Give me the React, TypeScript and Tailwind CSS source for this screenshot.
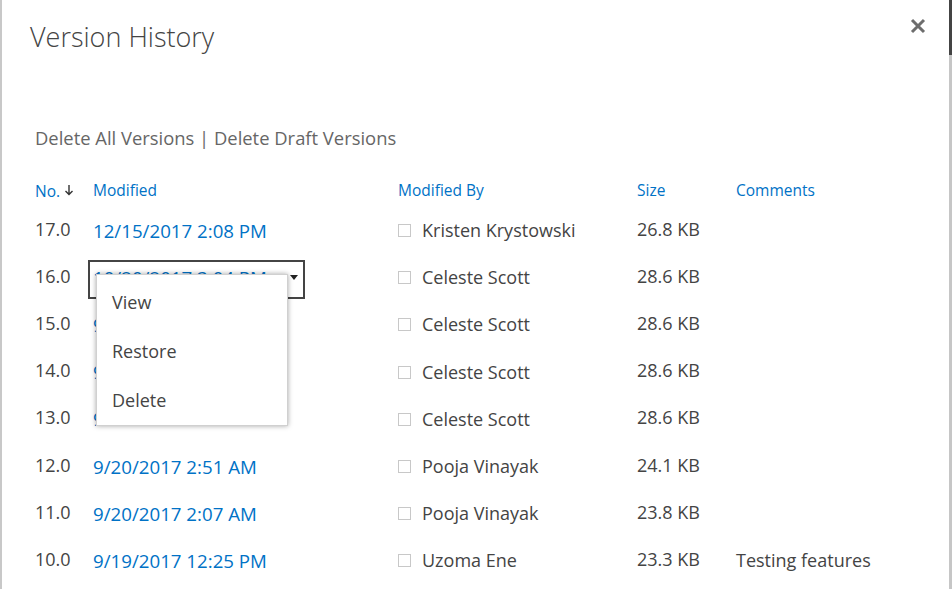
import React from "react";

const rows = [
  { no: "17.0", date: "12/15/2017 2:08 PM", by: "Kristen Krystowski", size: "26.8 KB", comment: "" },
  { no: "16.0", date: "10/20/2017 3:04 PM", by: "Celeste Scott", size: "28.6 KB", comment: "", menu: true },
  { no: "15.0", date: "9/20/2017 4:40 AM", by: "Celeste Scott", size: "28.6 KB", comment: "" },
  { no: "14.0", date: "9/20/2017 4:32 AM", by: "Celeste Scott", size: "28.6 KB", comment: "" },
  { no: "13.0", date: "9/20/2017 4:25 AM", by: "Celeste Scott", size: "28.6 KB", comment: "" },
  { no: "12.0", date: "9/20/2017 2:51 AM", by: "Pooja Vinayak", size: "24.1 KB", comment: "" },
  { no: "11.0", date: "9/20/2017 2:07 AM", by: "Pooja Vinayak", size: "23.8 KB", comment: "" },
  { no: "10.0", date: "9/19/2017 12:25 PM", by: "Uzoma Ene", size: "23.3 KB", comment: "Testing features" },
];

const font = { fontFamily: '"Open Sans", "Noto Sans", sans-serif' };

export default function App() {
  return (
    <div className="flex w-[952px] h-[589px] overflow-hidden bg-white text-[#444]" style={font}>
      <div className="w-[2px] bg-[#c8c8c8]" />
      <div className="flex-1 flex flex-col">
        <div className="flex items-start justify-between pl-[28px] pr-[23px] pt-[19px]">
          <h1 className="text-[27px] font-light leading-[36px] text-[#444]">Version History</h1>
          <svg width="16" height="16" viewBox="0 0 16 16" className="-mt-[1px]">
            <path d="M2 2 L14 14 M14 2 L2 14" stroke="#6d6d6d" strokeWidth="3" />
          </svg>
        </div>
        <div className="pl-[33px] mt-[71px] text-[18.4px] leading-[24px] text-[#666]">
          Delete All Versions | Delete Draft Versions
        </div>
        <div className="pl-[33px] mt-[28px]">
          <div className="grid grid-cols-[58px_305px_239px_99px_1fr] text-[15.5px] leading-[24px] text-[#0072c6] h-[26px]">
            <div className="flex items-center">
              No.
              <svg width="10" height="12" viewBox="0 0 10 12" className="ml-[4px] mb-[3px]">
                <path d="M5 1 V10 M1.5 7 L5 10.5 L8.5 7" stroke="#333" strokeWidth="1.4" fill="none" />
              </svg>
            </div>
            <div>Modified</div>
            <div>Modified By</div>
            <div>Size</div>
            <div>Comments</div>
          </div>
          <div className="mt-[3px] flex flex-col">
            {rows.map((r) => (
              <div
                key={r.no}
                className={
                  r.menu
                    ? "relative z-10 grid grid-cols-[58px_305px_239px_99px_1fr] h-[47.2px] items-center text-[18px]"
                    : "grid grid-cols-[58px_305px_239px_99px_1fr] h-[47.2px] items-center text-[18px]"
                }
              >
                <div className="text-[#444] -mt-[3px]">{r.no}</div>
                <div className="relative">
                  {r.menu ? (
                    <>
                      <div className="absolute -left-[5px] -top-[4px] w-[217px] h-[39px] border-2 border-[#444] bg-white" />
                      <div className="relative text-[#0072c6] whitespace-nowrap text-[18.7px]">{r.date}</div>
                      <svg width="8" height="5" viewBox="0 0 8 5" className="absolute left-[197px] top-[11px]">
                        <path d="M0 0 H8 L4 5 Z" fill="#222" />
                      </svg>
                      <div className="absolute left-[3px] top-[10px] w-[192px] h-[152px] bg-white shadow-[0_0_5px_rgba(0,0,0,0.35)] border border-[#d0d0d0] flex flex-col pt-[3px] pl-[15px] text-[#444]">
                        <div className="h-[50px] flex items-center">View</div>
                        <div className="h-[50px] flex items-center">Restore</div>
                        <div className="h-[50px] flex items-center">Delete</div>
                      </div>
                    </>
                  ) : (
                    <span className="text-[#0072c6] whitespace-nowrap text-[18.7px]">{r.date}</span>
                  )}
                </div>
                <div className="flex items-center">
                  <span className="w-[13px] h-[13px] border border-[#c8c8c8] mr-[11px] shrink-0" />
                  <span className="text-[#444]">{r.by}</span>
                </div>
                <div className="text-[#444] -mt-[3px]">{r.size}</div>
                <div className="text-[#444]">{r.comment}</div>
              </div>
            ))}
          </div>
        </div>
      </div>
      <div className="w-[3px] bg-[#c6c6c6] flex flex-col">
        <div className="h-[55px] bg-[#444]" />
      </div>
    </div>
  );
}
